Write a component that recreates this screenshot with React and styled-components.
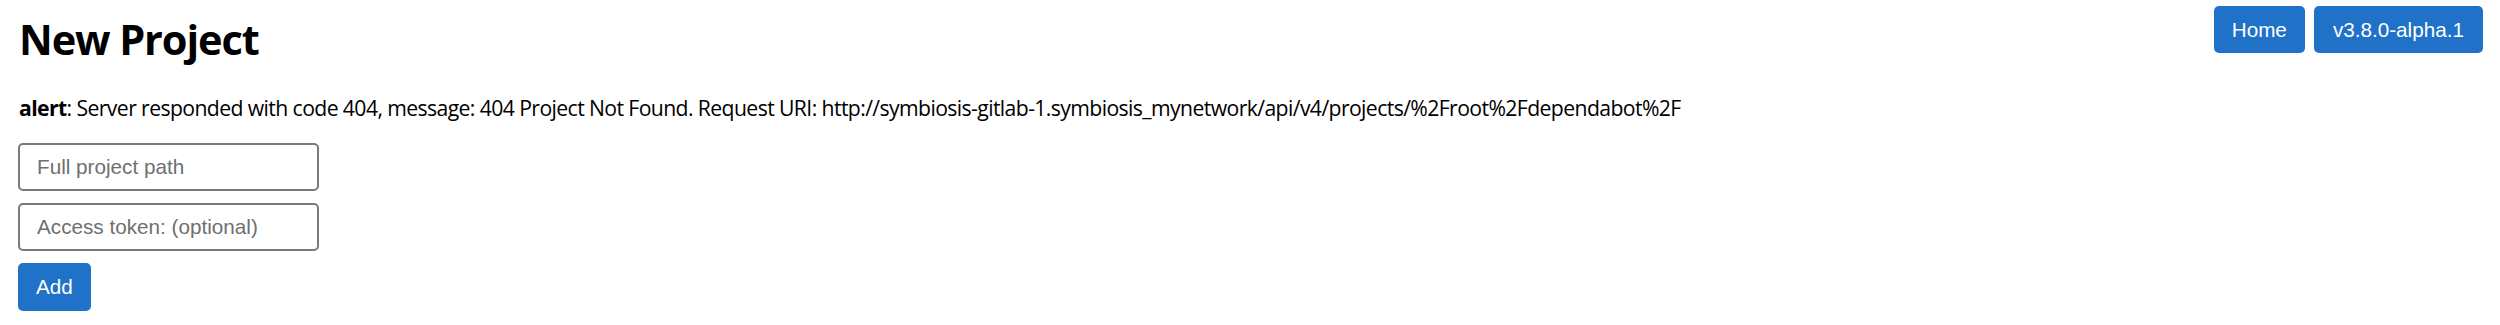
import React from "react";
import styled, { createGlobalStyle } from "styled-components";

const Global = createGlobalStyle`
  html, body { margin: 0; padding: 0; background: #fff; }
  body { font-family: "Open Sans", "Noto Sans", sans-serif; color: #000; }
`;

const Page = styled.div`
  padding: 6px 17px 0 19px;
  display: flex;
  flex-direction: column;
`;

const Header = styled.header`
  display: flex;
  justify-content: space-between;
  align-items: flex-start;
`;

const Title = styled.h1`
  margin: 8px 0 0 0;
  font-family: "Open Sans", "Noto Sans", sans-serif;
  font-weight: 700;
  font-size: 41.5px;
  line-height: 50px;
  letter-spacing: -1.1px;
`;

const Nav = styled.nav`
  display: flex;
  gap: 9px;
`;

const Button = styled.button`
  height: 47px;
  padding: 0 ${(p) => (p.$pad ? p.$pad : 18)}px;
  border: none;
  border-radius: 5px;
  background: #1f72c8;
  color: #fff;
  font-family: "Liberation Sans", Arial, sans-serif;
  font-size: 20.7px;
  cursor: pointer;
`;

const Alert = styled.p`
  margin: 29px 0 0 0;
  font-size: 21.2px;
  line-height: 30px;
  letter-spacing: -0.6px;
  white-space: nowrap;
  b { font-weight: 700; }
`;

const Form = styled.form`
  margin-top: 20px;
  display: flex;
  flex-direction: column;
  align-items: flex-start;
  gap: 12px;
  margin-left: -1px;
`;

const Input = styled.input`
  box-sizing: border-box;
  width: 301px;
  height: 48px;
  padding: 0 17px;
  border: 2px solid #7a7a7a;
  border-radius: 5px;
  font-family: "Liberation Sans", Arial, sans-serif;
  font-size: 20.7px;
  color: #000;
  background: #fff;
  &::placeholder { color: #6f6f6f; }
`;

const AddButton = styled(Button)`
  height: 48px;
`;

export default function App() {
  return (
    <>
      <Global />
      <Page>
        <Header>
          <Title>New Project</Title>
          <Nav>
            <Button type="button">Home</Button>
            <Button type="button" $pad={19}>v3.8.0-alpha.1</Button>
          </Nav>
        </Header>
        <Alert>
          <b>alert</b>: Server responded with code 404, message: 404 Project Not Found. Request URI: http://symbiosis-gitlab-1.symbiosis_mynetwork/api/v4/projects/%2Froot%2Fdependabot%2F
        </Alert>
        <Form onSubmit={(e) => e.preventDefault()}>
          <Input placeholder="Full project path" />
          <Input placeholder="Access token: (optional)" />
          <AddButton type="submit">Add</AddButton>
        </Form>
      </Page>
    </>
  );
}
